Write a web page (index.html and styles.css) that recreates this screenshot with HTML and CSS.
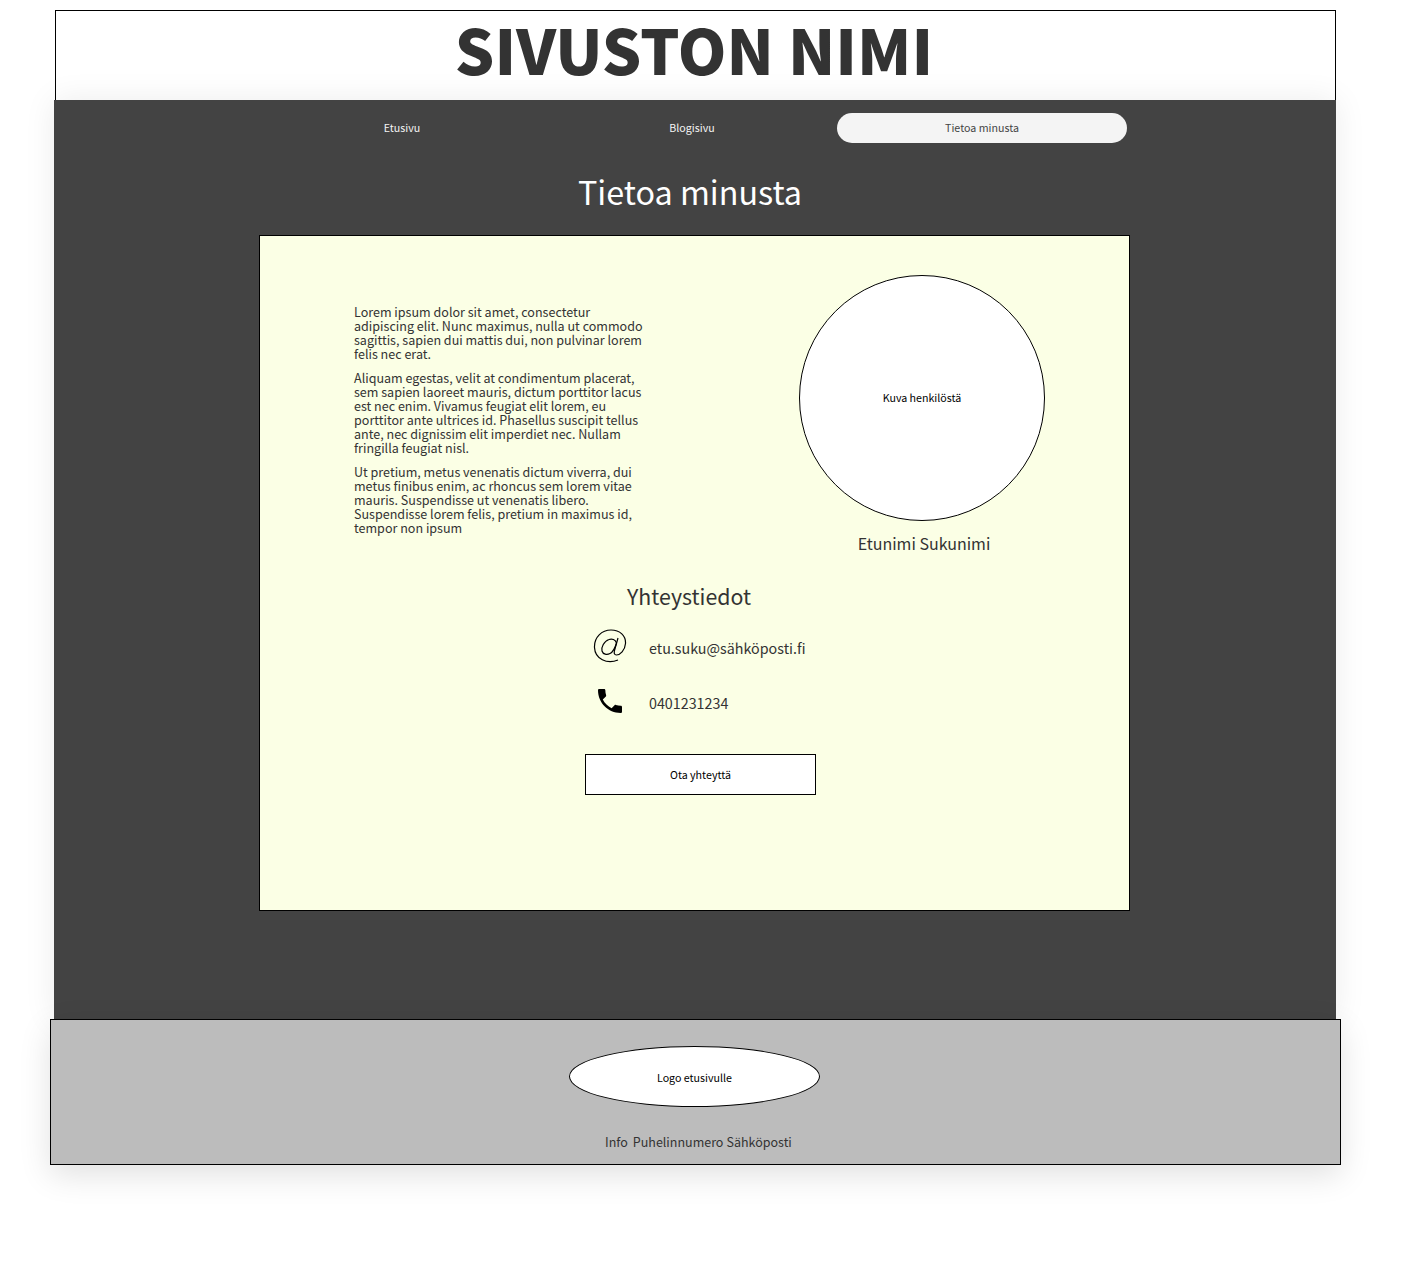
FILE: index.html
```html
<!DOCTYPE html>
<html lang="fi">
<head>
<meta charset="UTF-8">
<title>Tietoa minusta</title>
<link rel="stylesheet" href="styles.css">
</head>
<body>
<header class="site-head">
    <h1>SIVUSTON NIMI</h1>
</header>
<main class="main">
    <nav class="nav">
        <a href="#">Etusivu</a>
        <a href="#">Blogisivu</a>
        <a href="#" class="active">Tietoa minusta</a>
    </nav>
    <h2 class="page-title">Tietoa minusta</h2>
    <section class="card">
        <div class="intro">
            <div class="lorem">
                <p>Lorem ipsum dolor sit amet, consectetur adipiscing elit. Nunc maximus, nulla ut commodo sagittis, sapien dui mattis dui, non pulvinar lorem felis nec erat.</p>
                <p>Aliquam egestas, velit at condimentum placerat, sem sapien laoreet mauris, dictum porttitor lacus est nec enim. Vivamus feugiat elit lorem, eu porttitor ante ultrices id. Phasellus suscipit tellus ante, nec dignissim elit imperdiet nec. Nullam fringilla feugiat nisl.</p>
                <p>Ut pretium, metus venenatis dictum viverra, dui metus finibus enim, ac rhoncus sem lorem vitae mauris. Suspendisse ut venenatis libero. Suspendisse lorem felis, pretium in maximus id, tempor non ipsum</p>
            </div>
            <div class="person">
                <div class="photo">Kuva henkilöstä</div>
                <div class="name">Etunimi Sukunimi</div>
            </div>
        </div>
        <div class="contact">
            <h3>Yhteystiedot</h3>
            <div class="row">
                <svg class="at" viewBox="0 0 34 34"><path d="M25 31C14 35.500 2 30 1.500 18.500 1 8 9 1 18 1c9 0 15 6 14.500 13.500-.5 7-5.500 11.500-9 11.500-2.500 0-2.500-2-2-4.500L25 9"/><path d="M23.500 14c-1-3.500-4.500-4.500-7.500-3.500-5 1.500-8 8-7 11.500 1 3.500 5 4 8 2.500 3-1.500 5.500-7 6.500-10.500z"/></svg>
                <span>etu.suku@sähköposti.fi</span>
            </div>
            <div class="row">
                <svg class="phone" viewBox="0 0 24 24"><path d="M6.6 10.8c1.4 2.8 3.8 5.100 6.600 6.600l2.200-2.200c.3-.3.700-.4 1-.2 1.100.4 2.300.6 3.600.6.600 0 1 .4 1 1V20c0 .6-.4 1-1 1C10.600 21 3 13.400 3 4c0-.6.400-1 1-1h3.500c.6 0 1 .4 1 1 0 1.300.2 2.500.6 3.600.1.300 0 .7-.2 1z"/></svg>
                <span>0401231234</span>
            </div>
            <a href="#" class="btn">Ota yhteyttä</a>
        </div>
    </section>
</main>
<footer class="foot">
    <div class="logo">Logo etusivulle</div>
    <div class="foot-info">
        <span>Info</span>
        <span>Puhelinnumero</span>
        <span>Sähköposti</span>
    </div>
</footer>
</body>
</html>
```

FILE: styles.css
```css
* {
    padding: 0;
    margin: 0;
    box-sizing: border-box;
}

body {
    height: 1264px;
    background-color: white;
    color: #333;
    font-family: "Noto Sans CJK SC", "Noto Sans", sans-serif;
    overflow: hidden;
}

.site-head {
    width: 1281px;
    height: 90px;
    margin: 10px 0 0 55px;
    padding-right: 3px;
    border: 1px solid black;
    border-bottom: 0;
    text-align: center;
}

.site-head h1 {
    font-size: 62px;
    font-weight: 900;
    line-height: 74px;
}

.main {
    position: relative;
    width: 1282px;
    height: 920px;
    margin-left: 54px;
    padding-top: 13px;
    background-color: #434343;
    box-shadow: 0 0 30px rgba(0, 0, 0, 0.08);
}

.nav {
    display: grid;
    grid-template-columns: repeat(3, 290px);
    margin-left: 203px;
}

.nav a {
    height: 30px;
    border-radius: 15px;
    color: #f4f4f4;
    font-size: 10.67px;
    line-height: 30px;
    text-align: center;
    text-decoration: none;
}

.nav a.active {
    background-color: #f4f4f4;
    color: #444;
}

.page-title {
    margin-top: 25px;
    padding-right: 10px;
    color: white;
    font-size: 32.3px;
    font-weight: 400;
    line-height: 46px;
    text-align: center;
}

.card {
    width: 871px;
    height: 676px;
    margin: 21px 0 0 205px;
    border: 1px solid black;
    background-color: #fbffe5;
}

.intro {
    display: flex;
    padding-top: 39px;
}

.lorem {
    width: 290px;
    margin: 30px 0 0 94px;
    font-size: 12.55px;
    line-height: 14px;
}

.lorem p {
    margin-bottom: 10px;
}

.person {
    width: 250px;
    margin-left: 155px;
}

.photo {
    display: flex;
    align-items: center;
    justify-content: center;
    width: 246px;
    height: 246px;
    padding-bottom: 2px;
    border: 1px solid black;
    border-radius: 50%;
    background-color: white;
    color: black;
    font-size: 10.67px;
}

.name {
    margin-top: 11px;
    font-size: 16px;
    line-height: 22px;
    text-align: center;
}

.contact {
    width: 300px;
    margin: 27px 0 0 284px;
}

.contact h3 {
    width: 290px;
    margin-bottom: 9px;
    font-size: 21.33px;
    font-weight: 400;
    line-height: 30px;
    text-align: center;
}

.row {
    display: flex;
    align-items: center;
    height: 55px;
    font-size: 14.3px;
}

.at {
    width: 34px;
    height: 34px;
    margin: 0 22px 3px 49px;
    fill: none;
    stroke: black;
    stroke-width: 1.2;
}

.phone {
    width: 32px;
    height: 32px;
    margin: 0 23px 4px 50px;
}

.btn {
    display: block;
    width: 231px;
    height: 41px;
    margin: 24px 0 0 41px;
    border: 1px solid black;
    background-color: white;
    color: black;
    font-size: 10.67px;
    line-height: 39px;
    text-align: center;
    text-decoration: none;
}

.foot {
    position: relative;
    width: 1291px;
    height: 146px;
    margin: -1px 0 0 50px;
    padding-top: 26px;
    border: 1px solid black;
    background-color: #bcbcbc;
    box-shadow: 0 10px 30px rgba(0, 0, 0, 0.12);
}

.logo {
    width: 251px;
    height: 61px;
    margin-left: 518px;
    border: 1px solid black;
    border-radius: 50%;
    background-color: white;
    color: black;
    font-size: 10.67px;
    line-height: 61px;
    text-align: center;
}

.foot-info {
    display: flex;
    margin: 27px 0 0 554px;
    font-size: 12.5px;
    line-height: 16px;
}

.foot-info span:nth-child(2) {
    margin: 0 3px 0 5px;
}
```
